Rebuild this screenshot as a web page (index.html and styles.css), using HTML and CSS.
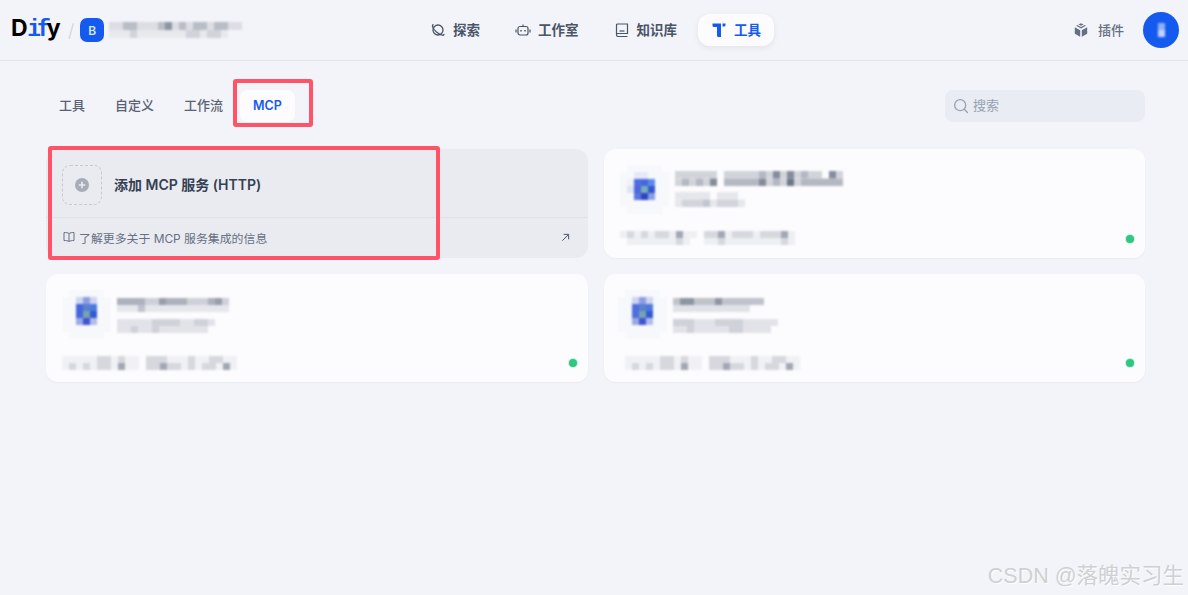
FILE: index.html
```html
<!DOCTYPE html>
<html lang="zh-CN">
<head>
    <meta charset="UTF-8">
    <meta name="viewport" content="width=device-width, initial-scale=1.0">
    <title>Dify - 工具</title>
    <link rel="stylesheet" href="styles.css">
</head>
<body>

<header class="topbar">
    <div class="topbar-left">
        <div class="logo">D<span class="logo-mid">if</span>y</div>
        <span class="crumb-slash">/</span>
        <span class="ws-badge">B</span>
        <svg class="mosaic ws-name" viewBox="0 0 19 2" width="133" height="16" preserveAspectRatio="none">
            <g fill="#dcdee4"><rect x="0" y="0" width="19" height="1"/></g>
            <g fill="#e8e9ed"><rect x="0" y="1" width="17" height="1"/></g>
            <g fill="#b9bdc6"><rect x="2" y="0" width="2" height="1"/><rect x="7" y="0" width="1" height="1"/><rect x="10" y="0" width="1" height="1"/><rect x="12" y="0" width="2" height="1"/><rect x="15" y="0" width="2" height="1"/></g>
            <g fill="#d0d3da"><rect x="3" y="1" width="1" height="1"/><rect x="11" y="1" width="2" height="1"/><rect x="14" y="1" width="2" height="1"/></g>
            <g fill="#8e94a1"><rect x="8" y="0" width="1" height="1"/></g>
        </svg>
    </div>

    <nav class="mainnav">
        <a class="nav-item">
            <svg width="16" height="16" viewBox="0 0 16 16" fill="none" stroke="#495464" stroke-width="1.3"><circle cx="8" cy="8" r="5"/><path d="M3 2.600 2.400 4c.4 2.400 2 4.400 4 6s4.300 3 6.700 3.300l.9-.8" stroke-linecap="round"/></svg>
            <span>探索</span>
        </a>
        <a class="nav-item">
            <svg width="16" height="16" viewBox="0 0 16 16" fill="none" stroke="#495464" stroke-width="1.2"><rect x="3" y="4.500" width="10" height="8.500" rx="2"/><path d="M8 4.500V2.500M1 7.500v3M15 7.500v3"/><path d="M6 8v1.500M10 8v1.500" stroke-width="1.500"/></svg>
            <span>工作室</span>
        </a>
        <a class="nav-item">
            <svg width="16" height="16" viewBox="0 0 16 16" fill="none" stroke="#495464" stroke-width="1.200"><path d="M2.500 12.500V3a1 1 0 0 1 1-1h10v9.500H4a1.500 1.500 0 0 0 0 3h9.500"/><path d="M5.500 9h5"/></svg>
            <span>知识库</span>
        </a>
        <a class="nav-item nav-item-active">
            <svg width="16" height="16" viewBox="0 0 16 16" fill="#155aef"><path d="M1.500 1.500H10V15H7.500A1.500 1.500 0 0 1 6 13.500V5H3A1.500 1.500 0 0 1 1.500 3.500z"/><path d="M11.500 1.500h3V3a1.500 1.500 0 0 1-1.500 1.500h-1.500z"/></svg>
            <span>工具</span>
        </a>
    </nav>

    <div class="topbar-right">
        <a class="plugin-link">
            <svg width="16" height="16" viewBox="0 0 16 16" fill="#676f83"><path d="M8 1.200 10.500 2.500 8 3.800 5.500 2.500z"/><path d="M1.800 5.300 7.200 8.300V14.700L1.800 11.700z"/><path d="M14.200 5.300 8.800 8.300V14.700L14.200 11.700z"/><path d="M3.200 3.700 8 6.400l4.800-2.700-1-.6L8 5 4.200 3.100z"/></svg>
            <span>插件</span>
        </a>
        <div class="avatar">
            <svg class="mosaic" viewBox="0 0 1 2" width="7" height="14" preserveAspectRatio="none"><rect x="0" y="0" width="1" height="1" fill="#8fb0f6"/><rect x="0" y="1" width="1" height="1" fill="#c0d4fb"/></svg>
        </div>
    </div>
</header>

<div class="toolbar">
    <div class="tabs">
        <a class="tab">工具</a>
        <a class="tab">自定义</a>
        <a class="tab">工作流</a>
        <a class="tab tab-active">MCP</a>
    </div>
    <div class="search">
        <svg width="16" height="16" viewBox="0 0 16 16" fill="none" stroke="#98a2b2" stroke-width="1.300"><circle cx="7.200" cy="7.200" r="5.500"/><path d="m11.300 11.300 3.200 3.200" stroke-linecap="round"/></svg>
        <span>搜索</span>
    </div>
</div>

<div class="card-grid">
    <div class="card add-card">
        <div class="add-top">
            <div class="add-icon">
                <svg width="16" height="16" viewBox="0 0 16 16"><circle cx="8" cy="8" r="7" fill="#a8acb7"/><path d="M8 4.800v6.400M4.800 8h6.400" stroke="#e9ebf1" stroke-width="1.600"/></svg>
            </div>
            <span class="add-title">添加 MCP 服务 (HTTP)</span>
        </div>
        <div class="add-foot">
            <svg width="12" height="12" viewBox="0 0 12 12" fill="none" stroke="#676f83"><path d="M6 2.500C5 1.800 3 1.500 1 1.500v8c2 0 4 .3 5 1 1-.7 3-1 5-1v-8c-2 0-4 .3-5 1zV10.500"/></svg>
            <span class="foot-text">了解更多关于 MCP 服务集成的信息</span>
            <svg class="foot-arrow" width="9" height="9" viewBox="0 0 10 10" fill="none" stroke="#495464" stroke-width="1.100"><path d="M1.500 8.500 8 2M3 1.500h5.500V7"/></svg>
        </div>
    </div>

    <div class="card server-card">
        <div class="server-top">
            <svg class="mosaic server-icon" viewBox="0 0 7 7" width="49" height="49">
                <g fill="#f7f8fb"><rect x="0" y="1" width="7" height="5"/><rect x="1" y="0" width="5" height="7"/></g>
                <rect x="1" y="2" width="1" height="1" fill="#f0f1f9"/><rect x="1" y="3" width="1" height="1" fill="#dfe3f3"/><rect x="2" y="1" width="2" height="1" fill="#e6e9f6"/>
                <rect x="2" y="2" width="1" height="1" fill="#4f6ee0"/><rect x="3" y="2" width="1" height="1" fill="#4568de"/><rect x="4" y="2" width="1" height="1" fill="#5a8ae8"/>
                <rect x="2" y="3" width="1" height="1" fill="#4f66e0"/><rect x="3" y="3" width="1" height="1" fill="#78aebb"/><rect x="4" y="3" width="1" height="1" fill="#3356d0"/>
                <rect x="2" y="4" width="1" height="1" fill="#5a76dc"/><rect x="3" y="4" width="1" height="1" fill="#2f45c0"/><rect x="4" y="4" width="1" height="1" fill="#8a9ee4"/>
            </svg>
            <div class="server-text server-text-a">
                <svg class="mosaic" viewBox="0 0 24 2" width="168" height="15" preserveAspectRatio="none">
                    <g fill="#d2d4da"><rect x="0" y="0" width="6" height="1"/><rect x="7" y="0" width="5" height="1"/><rect x="13" y="0" width="1" height="1"/><rect x="15" y="0" width="1" height="1"/><rect x="17" y="0" width="1" height="1"/><rect x="19" y="0" width="2" height="1"/><rect x="23" y="0" width="1" height="1"/><rect x="0" y="1" width="1" height="1"/><rect x="2" y="1" width="1" height="1"/><rect x="4" y="1" width="1" height="1"/><rect x="13" y="1" width="1" height="1"/><rect x="15" y="1" width="1" height="1"/><rect x="17" y="1" width="1" height="1"/></g>
                    <g fill="#b4b8c2"><rect x="12" y="0" width="1" height="1"/><rect x="18" y="0" width="1" height="1"/><rect x="1" y="1" width="1" height="1"/><rect x="3" y="1" width="1" height="1"/><rect x="7" y="1" width="5" height="1"/><rect x="14" y="1" width="1" height="1"/><rect x="18" y="1" width="3" height="1"/><rect x="21" y="1" width="3" height="1"/></g>
                    <g fill="#858b9a"><rect x="14" y="0" width="1" height="1"/><rect x="16" y="0" width="1" height="1"/><rect x="22" y="0" width="1" height="1"/><rect x="5" y="1" width="1" height="1"/><rect x="12" y="1" width="1" height="1"/></g>
                    <rect x="16" y="1" width="1" height="1" fill="#6f7686"/>
                </svg>
                <svg class="mosaic" viewBox="0 0 10 2" width="70" height="15" preserveAspectRatio="none">
                    <g fill="#e6e7ec"><rect x="0" y="0" width="5" height="1"/><rect x="6" y="0" width="3" height="1"/><rect x="0" y="1" width="1" height="1"/><rect x="5" y="1" width="1" height="1"/><rect x="9" y="1" width="1" height="1"/></g>
                    <g fill="#d2d4db"><rect x="1" y="1" width="3" height="1"/><rect x="6" y="1" width="3" height="1"/></g>
                    <rect x="4" y="1" width="1" height="1" fill="#c2c6d0"/>
                </svg>
            </div>
        </div>
        <svg class="mosaic server-meta" viewBox="0 0 25 2" width="175" height="14" preserveAspectRatio="none">
            <g fill="#eeeff2"><rect x="0" y="0" width="11" height="1"/><rect x="12" y="0" width="13" height="2"/><rect x="1" y="1" width="9" height="1"/></g>
            <g fill="#d6d8de"><rect x="1" y="0" width="1" height="1"/><rect x="3" y="0" width="1" height="1"/><rect x="5" y="0" width="2" height="1"/><rect x="8" y="1" width="1" height="1"/><rect x="12" y="0" width="3" height="1"/><rect x="16" y="0" width="2" height="1"/><rect x="18" y="0" width="1" height="1"/><rect x="20" y="0" width="3" height="1"/><rect x="14" y="1" width="1" height="1"/><rect x="23" y="1" width="1" height="1"/></g>
            <g fill="#a2a7b3"><rect x="8" y="0" width="1" height="1"/><rect x="14" y="0" width="1" height="1"/><rect x="23" y="0" width="1" height="1"/></g>
        </svg>
        <span class="status-dot"></span>
    </div>

    <div class="card server-card">
        <div class="server-top">
            <svg class="mosaic server-icon" viewBox="0 0 7 7" width="49" height="49">
                <g fill="#f7f8fb"><rect x="0" y="1" width="7" height="5"/><rect x="1" y="0" width="5" height="7"/></g>
                <rect x="2" y="1" width="1" height="1" fill="#cdd5f0"/><rect x="3" y="1" width="1" height="1" fill="#8d9edf"/><rect x="4" y="1" width="1" height="1" fill="#cdd5f0"/>
                <rect x="2" y="2" width="1" height="2" fill="#4566de"/><rect x="3" y="2" width="1" height="1" fill="#5a80d0"/><rect x="3" y="3" width="1" height="1" fill="#78a3b0"/><rect x="4" y="2" width="1" height="1" fill="#4a7ae0"/><rect x="4" y="3" width="1" height="1" fill="#3358d0"/>
                <rect x="2" y="4" width="1" height="1" fill="#9aa8e4"/><rect x="3" y="4" width="1" height="1" fill="#3f55d2"/><rect x="4" y="4" width="1" height="1" fill="#b0bcea"/>
            </svg>
            <div class="server-text server-text-b">
                <svg class="mosaic" viewBox="0 0 16 2" width="112" height="14" preserveAspectRatio="none">
                    <g fill="#cfd1d8"><rect x="0" y="0" width="16" height="1"/></g>
                    <g fill="#e6e7ec"><rect x="0" y="1" width="16" height="1"/></g>
                    <g fill="#adb1bc"><rect x="0" y="0" width="4" height="1"/><rect x="6" y="0" width="4" height="1"/><rect x="13" y="0" width="2" height="1"/></g>
                    <rect x="3" y="1" width="1" height="1" fill="#c0c3cc"/>
                    <rect x="6" y="0" width="1" height="1" fill="#989eac"/><rect x="14" y="0" width="1" height="1" fill="#989eac"/>
                </svg>
                <svg class="mosaic" viewBox="0 0 14 2" width="98" height="14" preserveAspectRatio="none">
                    <g fill="#e2e3e9"><rect x="0" y="0" width="14" height="1"/><rect x="0" y="1" width="13" height="1"/></g>
                    <g fill="#d0d2d9"><rect x="5" y="0" width="4" height="1"/><rect x="11" y="0" width="2" height="1"/><rect x="2" y="1" width="1" height="1"/><rect x="5" y="1" width="1" height="1"/></g>
                </svg>
            </div>
        </div>
        <svg class="mosaic server-meta" viewBox="0 0 25 2" width="175" height="14" preserveAspectRatio="none">
            <g fill="#f0f1f4"><rect x="0" y="0" width="11" height="2"/><rect x="12" y="0" width="13" height="2"/></g>
            <g fill="#d6d8de"><rect x="1" y="1" width="1" height="1"/><rect x="3" y="1" width="1" height="1"/><rect x="5" y="0" width="2" height="2"/><rect x="8" y="0" width="1" height="1"/><rect x="12" y="0" width="3" height="2"/><rect x="15" y="1" width="2" height="1"/><rect x="18" y="0" width="1" height="2"/><rect x="20" y="1" width="2" height="1"/><rect x="21" y="0" width="2" height="1"/></g>
            <g fill="#a2a7b3"><rect x="8" y="1" width="1" height="1"/><rect x="14" y="1" width="1" height="1"/><rect x="23" y="1" width="1" height="1"/></g>
        </svg>
        <span class="status-dot"></span>
    </div>

    <div class="card server-card server-card-shift">
        <div class="server-top">
            <svg class="mosaic server-icon" viewBox="0 0 7 7" width="49" height="49">
                <g fill="#f7f8fb"><rect x="0" y="1" width="7" height="5"/><rect x="1" y="0" width="5" height="7"/></g>
                <rect x="2" y="1" width="1" height="1" fill="#cdd5f0"/><rect x="3" y="1" width="1" height="1" fill="#8d9edf"/><rect x="4" y="1" width="1" height="1" fill="#cdd5f0"/>
                <rect x="2" y="2" width="1" height="2" fill="#4f6ee0"/><rect x="3" y="2" width="1" height="1" fill="#5a80d0"/><rect x="3" y="3" width="1" height="1" fill="#78a3b0"/><rect x="4" y="2" width="1" height="1" fill="#4a7ae0"/><rect x="4" y="3" width="1" height="1" fill="#3358d0"/>
                <rect x="2" y="4" width="1" height="1" fill="#9aa8e4"/><rect x="3" y="4" width="1" height="1" fill="#3f55d2"/><rect x="4" y="4" width="1" height="1" fill="#b0bcea"/>
            </svg>
            <div class="server-text server-text-b">
                <svg class="mosaic" viewBox="0 0 13 2" width="91" height="14" preserveAspectRatio="none">
                    <g fill="#c0c3cb"><rect x="0" y="0" width="13" height="1"/></g>
                    <g fill="#e0e2e7"><rect x="0" y="1" width="11" height="1"/></g>
                    <g fill="#8e94a1"><rect x="1" y="0" width="2" height="1"/><rect x="6" y="0" width="1" height="1"/></g>
                </svg>
                <svg class="mosaic" viewBox="0 0 15 2" width="105" height="14" preserveAspectRatio="none">
                    <g fill="#e2e3e9"><rect x="0" y="0" width="15" height="1"/><rect x="0" y="1" width="14" height="1"/></g>
                    <g fill="#d0d2d9"><rect x="0" y="0" width="3" height="1"/><rect x="6" y="0" width="4" height="1"/><rect x="2" y="1" width="1" height="1"/><rect x="8" y="1" width="2" height="1"/></g>
                </svg>
            </div>
        </div>
        <svg class="mosaic server-meta" viewBox="0 0 25 2" width="175" height="14" preserveAspectRatio="none">
            <g fill="#f0f1f4"><rect x="0" y="0" width="11" height="2"/><rect x="12" y="0" width="13" height="2"/></g>
            <g fill="#d6d8de"><rect x="1" y="1" width="1" height="1"/><rect x="3" y="1" width="1" height="1"/><rect x="5" y="0" width="2" height="2"/><rect x="8" y="0" width="1" height="1"/><rect x="12" y="0" width="3" height="2"/><rect x="15" y="1" width="2" height="1"/><rect x="18" y="0" width="1" height="2"/><rect x="20" y="1" width="2" height="1"/><rect x="21" y="0" width="2" height="1"/></g>
            <g fill="#a2a7b3"><rect x="8" y="1" width="1" height="1"/><rect x="14" y="1" width="1" height="1"/><rect x="23" y="1" width="1" height="1"/></g>
        </svg>
        <span class="status-dot"></span>
    </div>
</div>

<!-- Czerwone ramki z adnotacji i znak wodny leżą nad stroną -->
<div class="mark mark-tab"></div>
<div class="mark mark-card"></div>
<div class="watermark">CSDN @落魄实习生</div>

</body>
</html>
```

FILE: styles.css
```css
* {
    margin: 0;
    padding: 0;
    box-sizing: border-box;
}

body {
    position: relative;
    height: 595px;
    overflow: hidden;
    background-color: #f3f4f9;
    color: #354052;
    font-family: 'Inter', 'Noto Sans CJK SC', sans-serif;
}

.mosaic {
    display: block;
    filter: blur(1px);
}

/* Pasek górny */
.topbar {
    display: grid;
    grid-template-columns: 417px auto 1fr;
    align-items: center;
    height: 61px;
    border-bottom: 1px solid #e3e4ea;
}

.topbar-left {
    display: flex;
    align-items: center;
    padding-left: 11px;
}

.logo {
    width: 50px;
    padding-bottom: 3px;
    font-size: 23px;
    font-weight: 700;
    letter-spacing: -0.5px;
    color: #000;
    white-space: nowrap;
}

.logo-mid {
    font-family: 'Liberation Mono', monospace;
    letter-spacing: -4px;
    color: #155aef;
}

.crumb-slash {
    margin: 0 6px 0 7px;
    font-size: 18px;
    font-weight: 300;
    color: #d0d3db;
}

.ws-badge {
    display: flex;
    align-items: center;
    justify-content: center;
    width: 24px;
    height: 24px;
    border-radius: 7px;
    background-color: #155aef;
    color: #dbe6ff;
    font-size: 12px;
    font-weight: 600;
}

.ws-name {
    margin-left: 5px;
}

.mainnav {
    display: flex;
    gap: 9px;
}

.nav-item {
    display: flex;
    align-items: center;
    gap: 7px;
    height: 32px;
    padding: 0 13px;
    border-radius: 12px;
    font-size: 13.500px;
    font-weight: 600;
    color: #4a5568;
}

.nav-item span {
    padding-bottom: 2px;
}

.nav-item-active {
    margin-left: -1px;
    background-color: #fcfcfe;
    color: #155aef;
    box-shadow: 0 2px 6px rgba(16, 24, 40, 0.07);
}

.topbar-right {
    display: flex;
    align-items: center;
    justify-content: flex-end;
    gap: 19px;
    padding-right: 9px;
}

.plugin-link {
    display: flex;
    align-items: center;
    gap: 9px;
    font-size: 13px;
    font-weight: 500;
    color: #676f83;
}

.plugin-link span {
    padding-bottom: 2px;
}

.avatar {
    display: flex;
    align-items: center;
    justify-content: center;
    width: 36px;
    height: 36px;
    border-radius: 50%;
    background-color: #155aef;
}

/* Zakładki i szukanie */
.toolbar {
    display: flex;
    align-items: center;
    justify-content: space-between;
    padding: 29px 43px 27px 46px;
}

.tabs {
    display: flex;
    gap: 4px;
}

.tab {
    display: flex;
    align-items: center;
    height: 32px;
    padding: 0 13px 4px;
    border-radius: 8px;
    font-size: 13px;
    font-weight: 500;
    color: #596273;
}

.tab-active {
    padding-bottom: 2px;
    background-color: #fcfcfe;
    color: #155aef;
    font-weight: 600;
    font-size: 12.500px;
}

.search {
    display: flex;
    align-items: center;
    gap: 4px;
    width: 200px;
    height: 32px;
    padding: 0 8px 1px;
    border-radius: 8px;
    background-color: #e9ecf2;
    font-size: 13px;
    color: #98a2b2;
}

.search span {
    padding-bottom: 3px;
}

/* Karty */
.card-grid {
    display: grid;
    grid-template-columns: 542px 541px;
    grid-template-rows: 109px 108px;
    gap: 16px;
    padding-left: 46px;
}

.card {
    position: relative;
    border-radius: 12px;
}

.add-card {
    display: flex;
    flex-direction: column;
    background-color: #e9ebf1;
}

.add-top {
    display: flex;
    align-items: center;
    gap: 12px;
    height: 69px;
    padding: 3px 16px 0;
    border-bottom: 1px solid #e0e2e9;
}

.add-icon {
    display: flex;
    align-items: center;
    justify-content: center;
    width: 40px;
    height: 40px;
    border: 1px dashed #c8cad2;
    border-radius: 8px;
}

.add-title {
    padding-bottom: 1px;
    font-size: 14px;
    font-weight: 600;
    color: #354052;
}

.add-foot {
    display: flex;
    flex: 1;
    align-items: center;
    gap: 4px;
    padding: 0 18px 2px 17px;
    font-size: 11.900px;
    color: #676f83;
}

.foot-text {
    flex: 1;
}

.server-card {
    background-color: #fcfcfe;
    box-shadow: 0 1px 2px rgba(16, 24, 40, 0.04);
}

.server-top {
    display: flex;
    gap: 6px;
    padding: 16px 16px 0;
}

.server-text {
    display: flex;
    flex-direction: column;
    gap: 6px;
}

.server-text-a {
    padding-top: 6px;
}

.server-text-b {
    padding-top: 8px;
    gap: 7px;
}

.server-meta {
    margin: 17px 0 0 16px;
}

.server-card-shift .server-top {
    padding-left: 14px;
}

.server-card-shift .server-meta {
    margin-left: 21px;
}

.status-dot {
    position: absolute;
    right: 11px;
    bottom: 15px;
    width: 8px;
    height: 8px;
    border-radius: 50%;
    background-color: #2fc77f;
    box-shadow: 0 0 0 1px rgba(47, 199, 127, 0.25);
}

/* Adnotacje */
.mark {
    position: absolute;
    border: 4px solid #ff5468;
    border-radius: 3px;
}

.mark-tab {
    left: 233px;
    top: 79px;
    width: 80px;
    height: 48px;
}

.mark-card {
    left: 48px;
    top: 146px;
    width: 392px;
    height: 114px;
}

.watermark {
    position: absolute;
    right: 4px;
    top: 558px;
    font-family: 'Liberation Sans', 'Noto Sans CJK SC', sans-serif;
    font-size: 21.500px;
    color: #cfd0d3;
    text-shadow: 1px 1px 1px rgba(255, 255, 255, 0.9);
    white-space: nowrap;
}
```
